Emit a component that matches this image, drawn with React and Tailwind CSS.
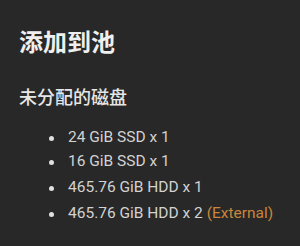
import React from "react";

const disks = [
  { label: "24 GiB SSD x 1" },
  { label: "16 GiB SSD x 1" },
  { label: "465.76 GiB HDD x 1" },
  { label: "465.76 GiB HDD x 2", note: "(External)" },
];

export default function App() {
  return (
    <div
      className="w-[300px] h-[246px] bg-[#282828] text-[#efefef] px-[19px] pt-[27px]"
      style={{ fontFamily: '"Noto Sans", "Noto Sans CJK SC", sans-serif' }}
    >
      <h1 className="text-[24px] font-bold leading-[30px]">添加到池</h1>
      <h2 className="mt-[28px] text-[18px] font-medium leading-[24px] text-[#e6e6e6]">未分配的磁盘</h2>
      <ul
        className="mt-[17px] pl-[30px] text-[15.5px] text-[#d2d2d2]"
        style={{ fontFamily: 'Roboto, "Noto Sans", sans-serif' }}
      >
        {disks.map((d, i) => (
          <li key={i} className={`flex items-center h-[24px] ${i >= 2 ? "mt-[2px]" : ""}`}>
            <span className="w-[5px] h-[5px] rounded-full bg-[#e0e0e0] mr-[14px]" />
            <span>
              {d.label}
              {d.note && <span className="text-[#c9853b]"> {d.note}</span>}
            </span>
          </li>
        ))}
      </ul>
    </div>
  );
}
